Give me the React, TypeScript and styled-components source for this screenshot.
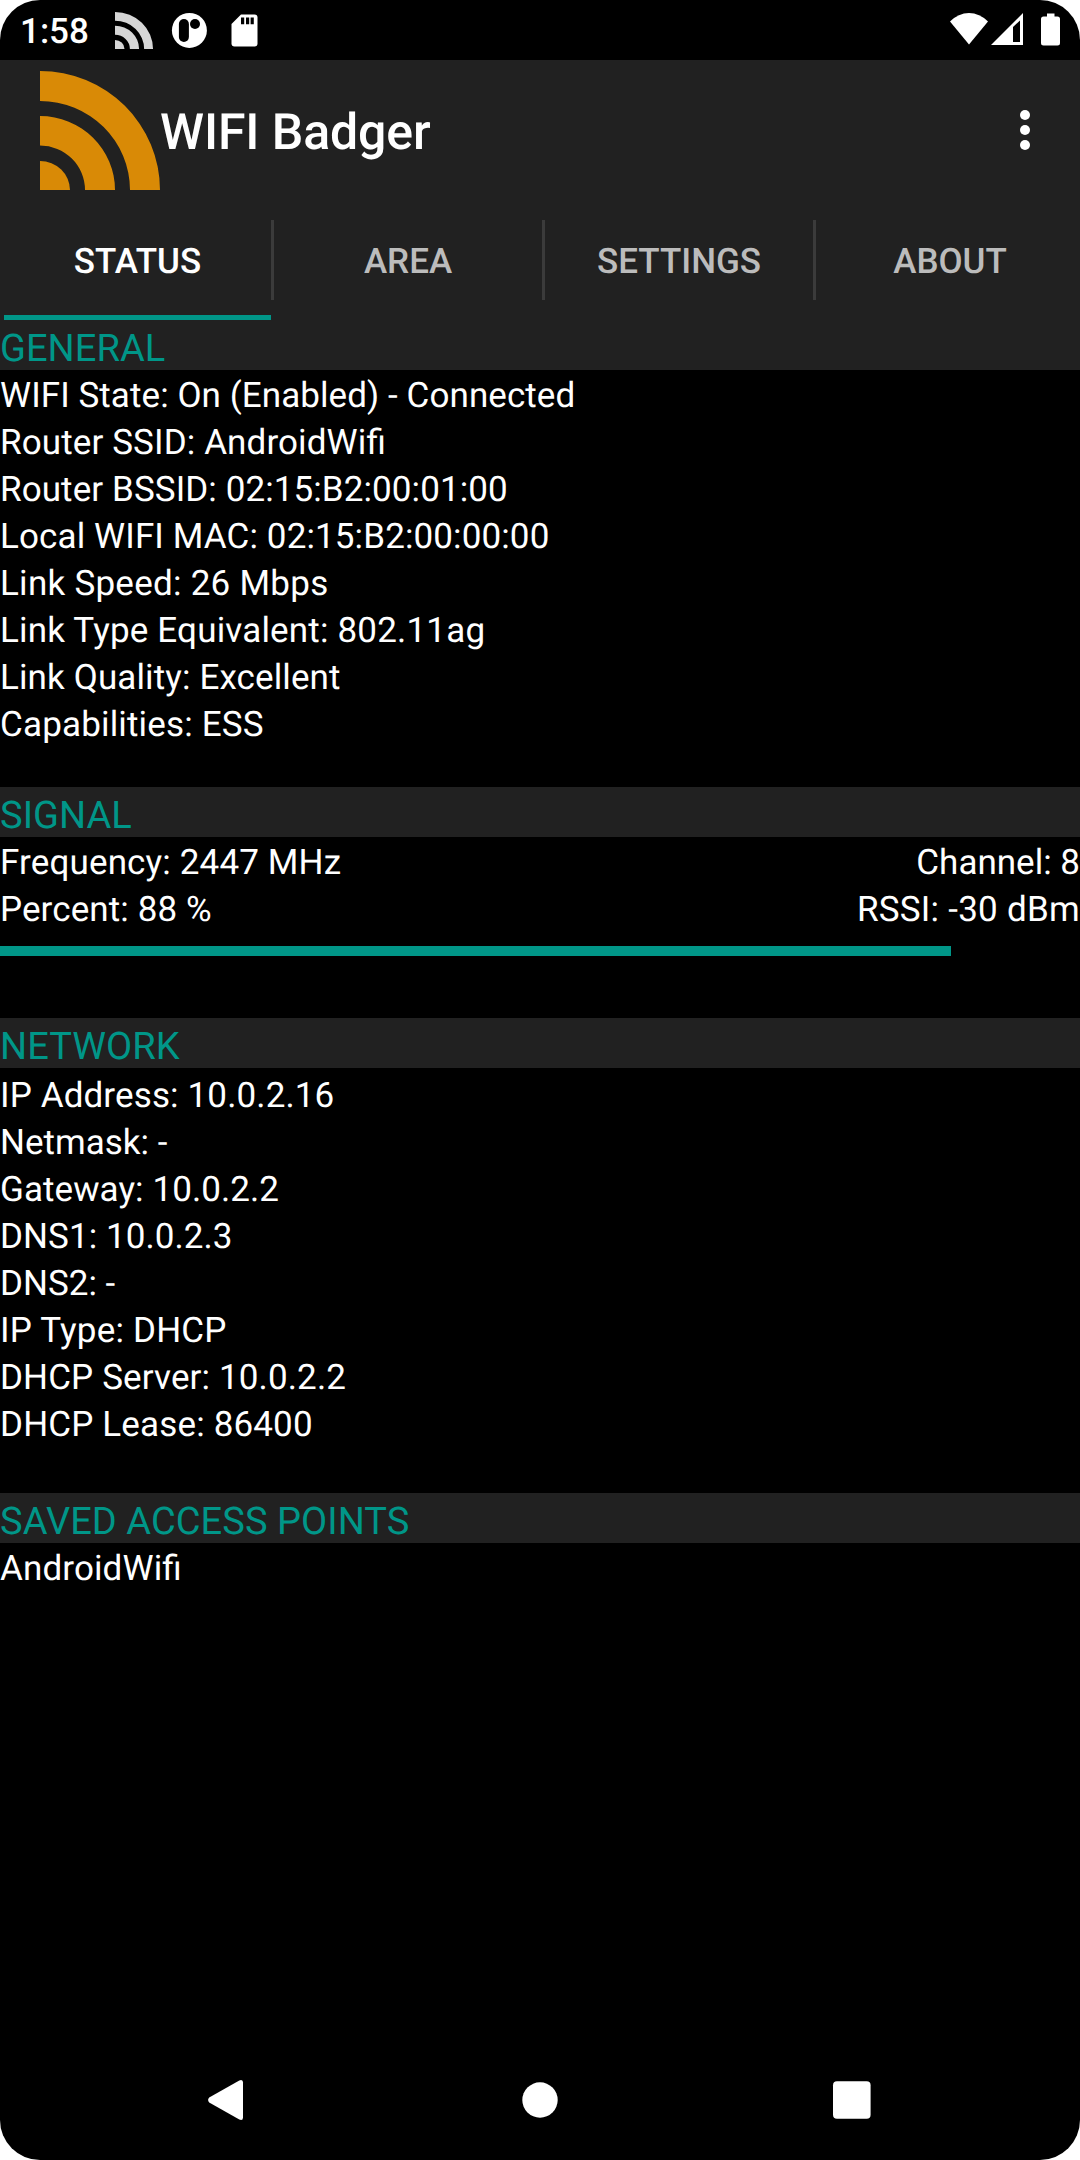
import React from "react";
import styled, { createGlobalStyle } from "styled-components";

const teal = "#009688";
const panel = "#212121";

const GlobalStyle = createGlobalStyle`
  body { margin: 0; background: #fff; }
  * { box-sizing: border-box; }
`;

const Screen = styled.div`
  width: 1080px;
  height: 2160px;
  display: flex;
  flex-direction: column;
  overflow: hidden;
  border-radius: 40px;
  background: #000;
  color: #fff;
  font-family: Roboto, "Liberation Sans", sans-serif;
  font-size: 35px;
  line-height: 47px;
  white-space: nowrap;
  text-rendering: geometricPrecision;
  font-feature-settings: "liga" 1;
`;

const StatusBar = styled.header`
  height: 60px;
  display: flex;
  flex: none;
  justify-content: space-between;
`;

const StatusGroup = styled.div`
  display: flex;
  height: 60px;
`;

const Clock = styled.span`
  width: 115px;
  padding-left: 20px;
  font-weight: 500;
  line-height: 64px;
`;

const Toolbar = styled.div`
  height: 140px;
  flex: none;
  display: flex;
  align-items: center;
  padding-left: 40px;
  background: ${panel};
`;

const Title = styled.h1`
  flex: 1;
  margin: 0;
  padding-top: 6px;
  font-size: 50px;
  font-weight: 500;
  line-height: 60px;
  letter-spacing: -0.12px;
`;

const MenuButton = styled.button`
  width: 110px;
  height: 140px;
  padding: 0;
  border: 0;
  background: none;
`;

const Tabs = styled.nav`
  height: 120px;
  flex: none;
  display: flex;
  padding-left: 4px;
  overflow: hidden;
  background: ${panel};
`;

const Tab = styled.button<{ $active?: boolean }>`
  width: ${(p) => (p.$active ? 267 : 268)}px;
  height: 120px;
  flex: none;
  padding: 7px 0 0;
  border: 0;
  border-bottom: 5px solid ${(p) => (p.$active ? teal : "transparent")};
  background: none;
  color: ${(p) => (p.$active ? "#fff" : "#bcbcbc")};
  font-family: inherit;
  font-size: 35px;
  font-weight: 500;
  line-height: 41px;
  text-rendering: inherit;
`;

const Divider = styled.i`
  width: 3px;
  height: 80px;
  flex: none;
  margin-top: 20px;
  background: #3b3b3b;
`;

const SectionTitle = styled.h2`
  height: 50px;
  margin: 0;
  padding-top: 4px;
  background: ${panel};
  color: ${teal};
  font-size: 38px;
  font-weight: 400;
  line-height: 50px;
  letter-spacing: 0.07px;
`;

const Section = styled.section<{ $height: number }>`
  height: ${(p) => p.$height}px;
  flex: none;
`;

const Lines = styled.div<{ $top?: number }>`
  padding-top: ${(p) => p.$top ?? 0}px;
`;

const Row = styled.div`
  height: 47px;
  padding-top: 2px;
  display: flex;
  justify-content: space-between;
`;

const Value = styled.span<{ $tracking?: number }>`
  letter-spacing: ${(p) => p.$tracking ?? 0}px;
`;

const Track = styled.div`
  height: 10px;
  margin-top: 15px;
`;

const Fill = styled.div`
  height: 10px;
  background: ${teal};
`;

const NavBar = styled.footer`
  height: 120px;
  margin-top: auto;
  flex: none;
  display: flex;
  align-items: center;
  justify-content: center;
  gap: 192px;
`;

type Line = { text: string; tracking: number };

const general: Line[] = [
  { text: "WIFI State: On (Enabled) - Connected", tracking: 0.075 },
  { text: "Router SSID: AndroidWifi", tracking: 0.12 },
  { text: "Router BSSID: 02:15:B2:00:01:00", tracking: 0.09 },
  { text: "Local WIFI MAC: 02:15:B2:00:00:00", tracking: 0.12 },
  { text: "Link Speed: 26 Mbps", tracking: 0.26 },
  { text: "Link Type Equivalent: 802.11ag", tracking: 0.18 },
  { text: "Link Quality: Excellent", tracking: 0.12 },
  { text: "Capabilities: ESS", tracking: 0.16 },
];

const network: Line[] = [
  { text: "IP Address: 10.0.2.16", tracking: 0.13 },
  { text: "Netmask: -", tracking: 0 },
  { text: "Gateway: 10.0.2.2", tracking: 0.08 },
  { text: "DNS1: 10.0.2.3", tracking: 0.07 },
  { text: "DNS2: -", tracking: 0 },
  { text: "IP Type: DHCP", tracking: 0.2 },
  { text: "DHCP Server: 10.0.2.2", tracking: 0.13 },
  { text: "DHCP Lease: 86400", tracking: 0.16 },
];

const percent = 88;
const trackWidth = 1080;

const LineList = ({ lines }: { lines: Line[] }) => (
  <>
    {lines.map(({ text, tracking }) => (
      <Row key={text}>
        <Value $tracking={tracking}>{text}</Value>
      </Row>
    ))}
  </>
);

const BadgerMark = () => (
  <svg width="120" height="119" viewBox="0 0 120 119" fill="#d98a06">
    <path d="M0 0A120 119 0 0 1 120 119H90A90 89 0 0 0 0 30Z" />
    <path d="M0 45A75 74 0 0 1 75 119H45A45 44.500 0 0 0 0 74.500Z" />
    <path d="M0 90A30 29 0 0 1 30 119H0Z" />
  </svg>
);

const NotificationIcons = () => (
  <svg width="150" height="60" viewBox="115 0 150 60" fill="#fff">
    <g transform="translate(115 12) scale(.3167 .3109)" fill="#d6d6d6">
      <path d="M0 0A120 119 0 0 1 120 119H92A92 91 0 0 0 0 28Z" />
      <path d="M0 44A76 75 0 0 1 76 119H47A47 46 0 0 0 0 73Z" />
      <path d="M0 90A30 29 0 0 1 30 119H0Z" />
    </g>
    <circle cx="189.400" cy="30.400" r="17.500" />
    <rect x="178.900" y="19" width="10" height="23" rx="5" fill="#000" />
    <circle cx="195" cy="24" r="5" fill="#000" />
    <path d="M241 14.500H254.500Q257.500 14.500 257.500 17.500V43.500Q257.500 46.500 254.500 46.500H234.500Q231.500 46.500 231.500 43.500V24Z" />
    <path d="M241 17.500h3.200v6.700h-3.200zM246 17.500h3.200v6.700h-3.200zM250.600 17.500h3.200v6.700h-3.200z" fill="#000" />
  </svg>
);

const SystemIcons = () => (
  <svg width="130" height="60" viewBox="950 0 130 60" fill="#fff">
    <path d="M950 21.500Q958.500 13 969 13T988 21.500L969 44.500Z" />
    <path fillRule="evenodd" d="M991 45L1023 13V45ZM1013 27V42H1020V20.500Z" />
    <path d="M1047 13.500H1054.500V16.500H1057.500Q1060 16.500 1060 19V43Q1060 45.500 1057.500 45.500H1043.500Q1041 45.500 1041 43V19Q1041 16.500 1043.500 16.500H1047Z" />
  </svg>
);

export default function App() {
  return (
    <>
      <GlobalStyle />
      <Screen>
        <StatusBar>
          <StatusGroup>
            <Clock>1:58</Clock>
            <NotificationIcons />
          </StatusGroup>
          <SystemIcons />
        </StatusBar>
        <Toolbar>
          <BadgerMark />
          <Title>WIFI Badger</Title>
          <MenuButton aria-label="More options">
            <svg width="110" height="140" fill="#fff">
              <circle cx="55" cy="55" r="5" />
              <circle cx="55" cy="70" r="5" />
              <circle cx="55" cy="85" r="5" />
            </svg>
          </MenuButton>
        </Toolbar>
        <Tabs>
          <Tab $active>STATUS</Tab>
          <Divider />
          <Tab>AREA</Tab>
          <Divider />
          <Tab>SETTINGS</Tab>
          <Divider />
          <Tab>ABOUT</Tab>
        </Tabs>
        <Section $height={467}>
          <SectionTitle>GENERAL</SectionTitle>
          <Lines>
            <LineList lines={general} />
          </Lines>
        </Section>
        <Section $height={231}>
          <SectionTitle>SIGNAL</SectionTitle>
          <Lines>
            <Row>
              <Value $tracking={0.15}>Frequency: 2447 MHz</Value>
              <Value>Channel: 8</Value>
            </Row>
            <Row>
              <Value $tracking={0.1}>Percent: {percent} %</Value>
              <Value $tracking={0.26}>RSSI: -30 dBm</Value>
            </Row>
          </Lines>
          <Track>
            <Fill style={{ width: Math.ceil((trackWidth * percent) / 100) }} />
          </Track>
        </Section>
        <Section $height={475}>
          <SectionTitle>NETWORK</SectionTitle>
          <Lines $top={2}>
            <LineList lines={network} />
          </Lines>
        </Section>
        <Section $height={97}>
          <SectionTitle>SAVED ACCESS POINTS</SectionTitle>
          <Row>
            <Value $tracking={0.12}>AndroidWifi</Value>
          </Row>
        </Section>
        <NavBar>
          <svg width="120" height="120" viewBox="168 0 120 120" fill="#fff">
            <path d="M209.200 57.500L239.300 40.400Q243 39 243 42.500V77.500Q243 81 239.300 79.600L209.200 62.500Q207 60 209.200 57.500Z" />
          </svg>
          <svg width="120" height="120" fill="#fff">
            <circle cx="60" cy="60" r="17.700" />
          </svg>
          <svg width="120" height="120" fill="#fff">
            <rect x="41" y="41.200" width="37.600" height="37.600" rx="4" />
          </svg>
        </NavBar>
      </Screen>
    </>
  );
}
